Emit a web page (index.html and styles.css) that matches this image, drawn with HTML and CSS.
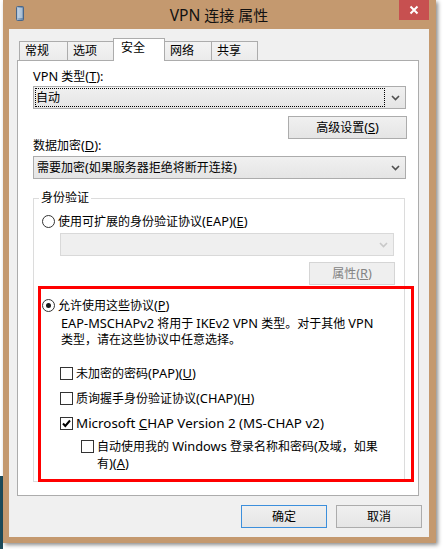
FILE: index.html
```html
<!DOCTYPE html>
<html lang="zh-CN">
<head>
<meta charset="utf-8">
<title>VPN 连接 属性</title>
<link rel="stylesheet" href="styles.css">
</head>
<body>
<div class="window">
  <div class="titlebar">
    <div class="app-icon">
      <svg width="8" height="15" viewBox="0 0 8 15">
        <defs>
          <linearGradient id="srv" x1="0" y1="0" x2="1" y2="0">
            <stop offset="0" stop-color="#a9c0d8"/>
            <stop offset="1" stop-color="#5d7fa5"/>
          </linearGradient>
        </defs>
        <rect x="0.5" y="0.5" width="7" height="14" rx="1" fill="url(#srv)" stroke="#4a6688"/>
        <line x1="1.5" y1="3" x2="6.5" y2="3" stroke="#e4edf6"/>
        <line x1="1.5" y1="5" x2="6.5" y2="5" stroke="#e4edf6"/>
        <line x1="1.5" y1="7" x2="6.5" y2="7" stroke="#e4edf6"/>
        <line x1="1.5" y1="9" x2="6.5" y2="9" stroke="#e4edf6"/>
        <line x1="1.5" y1="11" x2="6.5" y2="11" stroke="#e4edf6"/>
      </svg>
    </div>
    <div class="title"><span class="en">VPN</span> 连接 属性</div>
    <div class="close">
      <svg width="10" height="10" viewBox="0 0 10 10">
        <path d="M1.5 1.5 L8.5 8.5 M8.5 1.5 L1.5 8.5" stroke="#fff" stroke-width="2" fill="none"/>
      </svg>
    </div>
  </div>
  <div class="client">
    <div class="tabs">
      <div class="tab tab-1">常规</div>
      <div class="tab tab-2">选项</div>
      <div class="tab tab-3 selected">安全</div>
      <div class="tab tab-4">网络</div>
      <div class="tab tab-5">共享</div>
    </div>
    <div class="panel">
      <div class="label"><span class="en">VPN</span> 类型<span class="en">(<u>T</u>):</span></div>
      <div class="combo combo-1">
        <div class="combo-focus">自动</div>
        <div class="combo-arrow">
          <svg width="9" height="6" viewBox="0 0 9 6"><polyline points="1,1 4.5,4.5 8,1" fill="none" stroke="#505050" stroke-width="1.6"/></svg>
        </div>
      </div>
      <div class="btn-row">
        <div class="btn btn-adv">高级设置<span class="en">(<u>S</u>)</span></div>
      </div>
      <div class="label label-2">数据加密<span class="en">(<u>D</u>):</span></div>
      <div class="combo combo-2">
        <div class="combo-text">需要加密<span class="en">(</span>如果服务器拒绝将断开连接<span class="en">)</span></div>
        <div class="combo-arrow">
          <svg width="9" height="6" viewBox="0 0 9 6"><polyline points="1,1 4.5,4.5 8,1" fill="none" stroke="#505050" stroke-width="1.6"/></svg>
        </div>
      </div>
      <div class="group">
        <div class="legend">身份验证</div>
        <div class="opt opt-eap"><span class="radio"></span><span class="txt">使用可扩展的身份验证协议<span class="en">(EAP)(<u>E</u>)</span></span></div>
        <div class="combo combo-dis">
          <div class="combo-text"></div>
          <div class="combo-arrow">
            <svg width="9" height="6" viewBox="0 0 9 6"><polyline points="1,1 4.5,4.5 8,1" fill="none" stroke="#c8c8c8" stroke-width="1.6"/></svg>
          </div>
        </div>
        <div class="btn btn-dis">属性<span class="en">(<u>R</u>)</span></div>
        <div class="opt opt-allow"><span class="radio checked"></span><span class="txt">允许使用这些协议<span class="en">(<u>P</u>)</span></span></div>
        <div class="desc"><span class="en">EAP-MSCHAPv2</span> 将用于 <span class="en">IKEv2 VPN</span> 类型。对于其他 <span class="en">VPN</span><br>类型，请在这些协议中任意选择。</div>
        <div class="opt chk-row chk-pap"><span class="check"></span><span class="txt">未加密的密码<span class="en">(PAP)(<u>U</u>)</span></span></div>
        <div class="opt chk-row chk-chap"><span class="check"></span><span class="txt">质询握手身份验证协议<span class="en">(CHAP)(<u>H</u>)</span></span></div>
        <div class="opt chk-row chk-ms"><span class="check checked"><svg width="11" height="11" viewBox="0 0 11 11"><polyline points="2,5.5 4.3,8 9,2.5" fill="none" stroke="#000" stroke-width="2"/></svg></span><span class="txt ms">Microsoft <u>C</u>HAP Version 2 (MS-CHAP v2)</span></div>
        <div class="opt chk-nested"><span class="check"></span><span class="nested-text">自动使用我的 <span class="en">Windows</span> 登录名称和密码<span class="en">(</span>及域，如果<br>有<span class="en">)(<u>A</u>)</span></span></div>
      </div>
      <div class="highlight"></div>
    </div>
    <div class="actions">
      <div class="btn btn-ok">确定</div>
      <div class="btn btn-cancel">取消</div>
    </div>
  </div>
</div>
</body>
</html>
```

FILE: styles.css
```css
* { box-sizing: border-box; }
html, body { margin: 0; padding: 0; }
body {
  width: 443px;
  height: 549px;
  overflow: hidden;
  background: linear-gradient(#1d4b5b, #1d4b5b) no-repeat 0 476px / 3px 73px, #ffffff;
  font-family: "Noto Sans", "Noto Sans CJK SC", sans-serif;
  font-size: 12px;
  line-height: 16px;
  color: #000;
}
.en { font-size: 12.8px; }
.ms { font-size: 13.4px; }
u { text-decoration: underline; text-underline-offset: 1px; }

.window {
  margin-left: 3px;
  width: 433px;
  height: 543px;
  background: #c4996f;
  padding: 0 7px 6px 6px;
  display: flex;
  flex-direction: column;
  box-shadow: 2px 2px 4px rgba(0, 0, 0, 0.45);
}

.titlebar {
  height: 29px;
  display: grid;
  grid-template-columns: 1fr auto 1fr;
  align-items: start;
}
.app-icon { padding: 6px 0 0 7px; line-height: 0; }
.title {
  font-size: 15px;
  line-height: 20px;
  padding-top: 5px;
  color: #111;
}
.title .en { font-size: 15.6px; }
.close {
  justify-self: end;
  width: 30px;
  height: 20px;
  background: #c75050;
  display: flex;
  align-items: center;
  justify-content: center;
}

.client {
  flex: 1;
  background: #f0f0f0;
  display: flex;
  flex-direction: column;
}

.tabs {
  margin: 9px 0 0 10px;
  height: 22px;
  display: flex;
  align-items: flex-end;
}
.tab {
  height: 19px;
  border: 1px solid #acacac;
  border-bottom: none;
  background: linear-gradient(#f3f3f3, #ebebeb);
  padding-left: 5px;
  line-height: 17px;
  margin-left: -1px;
}
.tab-1 { width: 49px; margin-left: 0; }
.tab-2 { width: 47px; }
.tab-3 { width: 52px; }
.tab-4 { width: 48px; }
.tab-5 { width: 47px; }
.tab.selected {
  height: 23px;
  margin-bottom: -1px;
  background: #fff;
  padding: 1px 0 0 7px;
  line-height: 16px;
  position: relative;
  z-index: 1;
}

.panel {
  position: relative;
  margin: 0 10px 0 8px;
  height: 436px;
  border: 1px solid #acacac;
  background: #fff;
  padding: 7px 12px 0 15px;
  display: flex;
  flex-direction: column;
}

.label { height: 16px; white-space: nowrap; }
.label-2 { margin-top: -2px; }

.combo {
  height: 23px;
  border: 1px solid #acacac;
  background: linear-gradient(#f0f0f0, #e5e5e5);
  display: flex;
  align-items: stretch;
}
.combo-1 { margin-top: 2px; }
.combo-2 { margin-top: 3px; }
.combo-focus {
  flex: 1;
  margin: 1px 0 1px 1px;
  border: 1px dotted #000;
  line-height: 17px;
  padding-left: 0;
}
.combo-text {
  flex: 1;
  padding-left: 3px;
  line-height: 21px;
  white-space: nowrap;
}
.combo-arrow {
  width: 20px;
  display: flex;
  align-items: center;
  justify-content: center;
}

.btn {
  height: 23px;
  border: 1px solid #acacac;
  background: linear-gradient(#f0f0f0, #e5e5e5);
  text-align: center;
  line-height: 21px;
  white-space: nowrap;
}
.btn-row {
  margin-top: 7px;
  display: flex;
  justify-content: flex-end;
}
.btn-adv { width: 119px; margin-right: -1px; }

.group {
  margin-top: 19px;
  border: 1px solid #dcdcdc;
  display: flex;
  flex-direction: column;
  padding: 0 0 9px 0;
  margin-right: 1px;
}
.legend {
  align-self: flex-start;
  margin: -9px 0 0 5px;
  padding: 0 2px;
  background: #fff;
  height: 16px;
}

.opt {
  display: flex;
  align-items: center;
  height: 16px;
  white-space: nowrap;
}
.opt-eap { margin-top: 7px; padding-left: 8px; }
.opt-allow { margin-top: 12px; padding-left: 8px; }

.radio {
  width: 13px;
  height: 13px;
  border: 1px solid #333;
  border-radius: 50%;
  background: #fff;
  margin-right: 3px;
  display: flex;
  align-items: center;
  justify-content: center;
  flex: none;
}
.radio.checked::after {
  content: "";
  width: 5px;
  height: 5px;
  border-radius: 50%;
  background: #1a1a1a;
}

.combo-dis {
  margin: 4px 10px 0 26px;
  border-color: #d9d9d9;
  background: #efefef;
}
.btn-dis {
  margin: 6px 9px 0 0;
  align-self: flex-end;
  width: 86px;
  border-color: #d5d5d5;
  background: #efefef;
  color: #838383;
}

.desc {
  margin-top: 2px;
  padding-left: 27px;
  line-height: 16px;
  white-space: nowrap;
}

.check {
  width: 13px;
  height: 13px;
  border: 1px solid #333;
  background: #fff;
  margin-right: 3px;
  flex: none;
  display: flex;
  align-items: center;
  justify-content: center;
}
.chk-row { padding-left: 26px; }
.chk-pap { margin-top: 17px; }
.chk-chap { margin-top: 9px; }
.chk-ms { margin-top: 9px; }

.chk-nested {
  margin-top: 7px;
  height: auto;
  align-items: flex-start;
  padding-left: 47px;
  line-height: 16px;
}
.chk-nested .check { margin-top: 2px; }
.nested-text { white-space: nowrap; }

.highlight {
  position: absolute;
  left: 20px;
  top: 225px;
  width: 376px;
  height: 196px;
  border: 3px solid #ff0000;
  pointer-events: none;
}

.actions {
  margin: 9px 7px 0 0;
  display: flex;
  justify-content: flex-end;
  gap: 9px;
}
.btn-ok { width: 86px; border-color: #3c8fdc; }
.btn-cancel { width: 86px; }
```
